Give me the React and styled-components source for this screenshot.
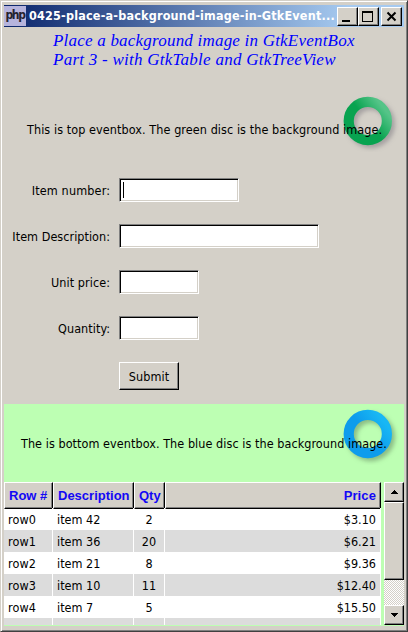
import React from "react";
import styled, { createGlobalStyle, css } from "styled-components";

const Global = createGlobalStyle`
  *, *::before, *::after { box-sizing: border-box; }
  body { margin: 0; overflow: hidden; background: #d4d0c8; }
`;

const face = "#d4d0c8";
const mint = "#bdffb3";

const Window = styled.div`
  width: 408px;
  height: 632px;
  display: flex;
  flex-direction: column;
  padding: 3px 2px 4px 2px;
  background: ${face};
  border: 1px solid #d4d0c8;
  border-right-color: #404040;
  border-bottom-color: #404040;
  box-shadow: inset 1px 1px 0 #fff, inset -1px -1px 0 #808080;
  font: 12.5px/16px "DejaVu Sans Condensed", "DejaVu Sans", sans-serif;
  font-stretch: condensed;
  color: #000;
`;

const TitleBar = styled.header`
  height: 22px;
  flex: none;
  margin: 1px 1px 0;
  padding-right: 2px;
  display: flex;
  align-items: center;
  background: linear-gradient(90deg, #0a246a, #a6caf0 86%);
`;

const PhpIcon = styled.span`
  width: 22px;
  height: 20px;
  flex: none;
  display: flex;
  justify-content: center;
  background: #b6b4dd;
  font: bold 12px/18px "DejaVu Sans Condensed", sans-serif;
  font-stretch: condensed;
  letter-spacing: -1.4px;
  color: #25222e;
`;

const Caption = styled.h1`
  flex: 1;
  margin: 0 0 0 3px;
  white-space: nowrap;
  font: bold 12.5px/20px "DejaVu Sans Condensed", sans-serif;
  font-stretch: condensed;
  letter-spacing: ${(p) => p.$track}px;
  color: #fff;
`;

const raised = css`
  border: 1px solid;
  border-color: #fff #000 #000 #fff;
  box-shadow: inset -1px -1px 0 #808080;
`;

const WindowButton = styled.button`
  ${raised}
  width: 21px;
  height: 19px;
  flex: none;
  padding: 0;
  margin-left: ${(p) => p.$gap || 0}px;
  background: ${face};
  svg { display: block; }
`;

const Heading = styled.div`
  flex: none;
  height: 65px;
  margin-top: 4px;
  padding-left: 50px;
  white-space: nowrap;
  font: italic 17px/19px "Liberation Serif", serif;
  color: #00f;
`;

const HeadLine = styled.div`
  letter-spacing: ${(p) => p.$track}px;
`;

const EventBox = styled.section`
  position: relative;
  flex: none;
  height: ${(p) => p.$height}px;
  margin: 0 1px;
  padding: ${(p) => p.$pad};
  background: ${(p) => p.$bg};
  white-space: nowrap;
`;

const Message = styled.p`
  position: relative;
  margin: 0;
  letter-spacing: ${(p) => p.$track}px;
`;

const DiscArt = styled.svg`
  position: absolute;
  right: 3px;
  top: ${(p) => p.$top}px;
`;

const Form = styled.form`
  flex: none;
  height: 226px;
  margin: 0 1px;
  display: grid;
  grid-template-columns: 106px max-content;
  grid-template-rows: repeat(4, 24px) 28px;
  gap: 22px 9px;
  align-items: center;
  justify-items: start;
`;

const Label = styled.label`
  justify-self: end;
  white-space: nowrap;
  padding-top: 1px;
  letter-spacing: ${(p) => p.$track}px;
  margin-right: ${(p) => -p.$track}px;
`;

const Field = styled.div`
  width: ${(p) => p.$width}px;
  height: 24px;
  padding: 2px;
  background: #fff;
  border: 1px solid;
  border-color: #808080 #fff #fff #808080;
  box-shadow: inset 1px 1px 0 #000, inset -1px -1px 0 ${face};
`;

const Caret = styled.div`
  width: 1px;
  height: 16px;
  margin: 1px 0 0 1px;
  background: #000;
`;

const Submit = styled.button`
  ${raised}
  grid-column: 2;
  width: 60px;
  height: 28px;
  padding: 1px 0 0;
  background: ${face};
  font: inherit;
  letter-spacing: ${(p) => p.$track}px;
  color: #000;
`;

const ListArea = styled.section`
  flex: none;
  height: 144px;
  margin: 0 1px;
  padding-bottom: 1px;
  display: flex;
  justify-content: space-between;
  background: ${mint};
`;

const Tree = styled.div`
  width: 377px;
  height: 143px;
  overflow: hidden;
`;

const columns = "49px 81px 31px 216px";

const HeaderRow = styled.div`
  display: grid;
  grid-template-columns: ${columns};
  height: 26px;
`;

const HeaderCell = styled.div`
  ${raised}
  padding: 0 4px;
  background: ${face};
  text-align: ${(p) => p.$align || "left"};
  font: bold 13px/25px "Liberation Sans", sans-serif;
  letter-spacing: ${(p) => p.$track || 0}px;
  white-space: nowrap;
  color: #1208f5;
`;

const Row = styled.div`
  display: grid;
  grid-template-columns: ${columns};
  height: 22px;
  background: ${(p) => (p.$odd ? "#dcdcdc" : "#fff")};
`;

const Cell = styled.div`
  padding: 0 4px;
  border-right: 1px solid #fff;
  line-height: 24px;
  letter-spacing: ${(p) => p.$track || 0}px;
  text-align: ${(p) => p.$align || "left"};
  white-space: nowrap;
`;

const ScrollBar = styled.div`
  width: 20px;
  height: 143px;
  display: flex;
  flex-direction: column;
  background: repeating-conic-gradient(#fff 0 25%, ${face} 0 50%) 0 0 / 2px 2px;
`;

const ScrollPart = styled.div`
  ${raised}
  height: ${(p) => p.$height}px;
  margin-top: ${(p) => p.$push || "0"};
  display: flex;
  align-items: center;
  justify-content: center;
  background: ${face};
`;

function Disc({ id, top, from, to, shade }) {
  return (
    <DiscArt $top={top} width="64" height="64" viewBox="0 0 64 64">
      <defs>
        <linearGradient id={id} x1="0.2" y1="0.7" x2="0.9" y2="0.15">
          <stop offset="0.4" stopColor={from} />
          <stop offset="1" stopColor={to} />
        </linearGradient>
        <filter id={id + "Shadow"} x="-30%" y="-30%" width="160%" height="160%" colorInterpolationFilters="sRGB">
          <feDropShadow dx="3" dy="3" stdDeviation="2.2" floodColor={shade} floodOpacity="0.5" />
        </filter>
      </defs>
      <circle cx="30.8" cy="27" r="19.1" fill="none" stroke={`url(#${id})`} strokeWidth="10.2" filter={`url(#${id}Shadow)`} />
    </DiscArt>
  );
}

const fields = [
  { label: "Item number:", width: 120, track: 0.15, caret: true },
  { label: "Item Description:", width: 200, track: 0.04 },
  { label: "Unit price:", width: 80, track: 0.08 },
  { label: "Quantity:", width: 80, track: 0.06 },
];

const rows = [
  ["row0", "item 42", "2", "$3.10"],
  ["row1", "item 36", "20", "$6.21"],
  ["row2", "item 21", "8", "$9.36"],
  ["row3", "item 10", "11", "$12.40"],
  ["row4", "item 7", "5", "$15.50"],
  ["", "", "", ""],
];

export default function App() {
  return (
    <Window>
      <Global />
      <TitleBar>
        <PhpIcon>php</PhpIcon>
        <Caption $track={0.19}>0425-place-a-background-image-in-GtkEvent...</Caption>
        <WindowButton aria-label="Minimize">
          <svg width="19" height="17"><path d="M4 12h8v2H4z" /></svg>
        </WindowButton>
        <WindowButton aria-label="Maximize">
          <svg width="19" height="17"><path d="M3 3h11v11H3zM4 5v8h9V5z" fillRule="evenodd" /></svg>
        </WindowButton>
        <WindowButton aria-label="Close" $gap={2}>
          <svg width="19" height="17"><path d="M5.5 4.5l8 8M13.5 4.5l-8 8" stroke="#000" strokeWidth="2" /></svg>
        </WindowButton>
      </TitleBar>
      <Heading>
        <HeadLine $track={0.21}>Place a background image in GtkEventBox</HeadLine>
        <HeadLine $track={0.25}>Part 3 - with GtkTable and GtkTreeView</HeadLine>
      </Heading>
      <EventBox $height={82} $pad="26px 0 0 23px" $bg="transparent">
        <Disc id="greenDisc" top={-2} from="#08a350" to="#55c488" shade="#77747c" />
        <Message $track={0.08}>This is top eventbox. The green disc is the background image.</Message>
      </EventBox>
      <Form>
        {fields.map((f) => (
          <React.Fragment key={f.label}>
            <Label $track={f.track}>{f.label}</Label>
            <Field $width={f.width}>{f.caret && <Caret />}</Field>
          </React.Fragment>
        ))}
        <Submit type="button" $track={0.08}>Submit</Submit>
      </Form>
      <EventBox $height={78} $pad="32px 0 0 17px" $bg={mint}>
        <Disc id="blueDisc" top={3} from="#0d9cec" to="#18b7f4" shade="#5b7b58" />
        <Message $track={0.06}>The is bottom eventbox. The blue disc is the background image.</Message>
      </EventBox>
      <ListArea>
        <Tree>
          <HeaderRow>
            <HeaderCell>Row #</HeaderCell>
            <HeaderCell>Description</HeaderCell>
            <HeaderCell>Qty</HeaderCell>
            <HeaderCell $align="right" $track={0.1}>Price</HeaderCell>
          </HeaderRow>
          {rows.map(([row, item, qty, price], i) => (
            <Row key={i} $odd={i % 2 === 1}>
              <Cell $track={0.15}>{row}</Cell>
              <Cell>{item}</Cell>
              <Cell $align="center">{qty}</Cell>
              <Cell $align="right">{price}</Cell>
            </Row>
          ))}
        </Tree>
        <ScrollBar>
          <ScrollPart $height={20}>
            <svg width="7" height="4"><path d="M3 0h1v1h1v1h1v1h1v1H0V3h1V2h1V1h1z" /></svg>
          </ScrollPart>
          <ScrollPart $height={78} />
          <ScrollPart $height={20} $push="auto">
            <svg width="7" height="4"><path d="M0 0h7v1H6v1H5v1H4v1H3V3H2V2H1V1H0z" /></svg>
          </ScrollPart>
        </ScrollBar>
      </ListArea>
    </Window>
  );
}
